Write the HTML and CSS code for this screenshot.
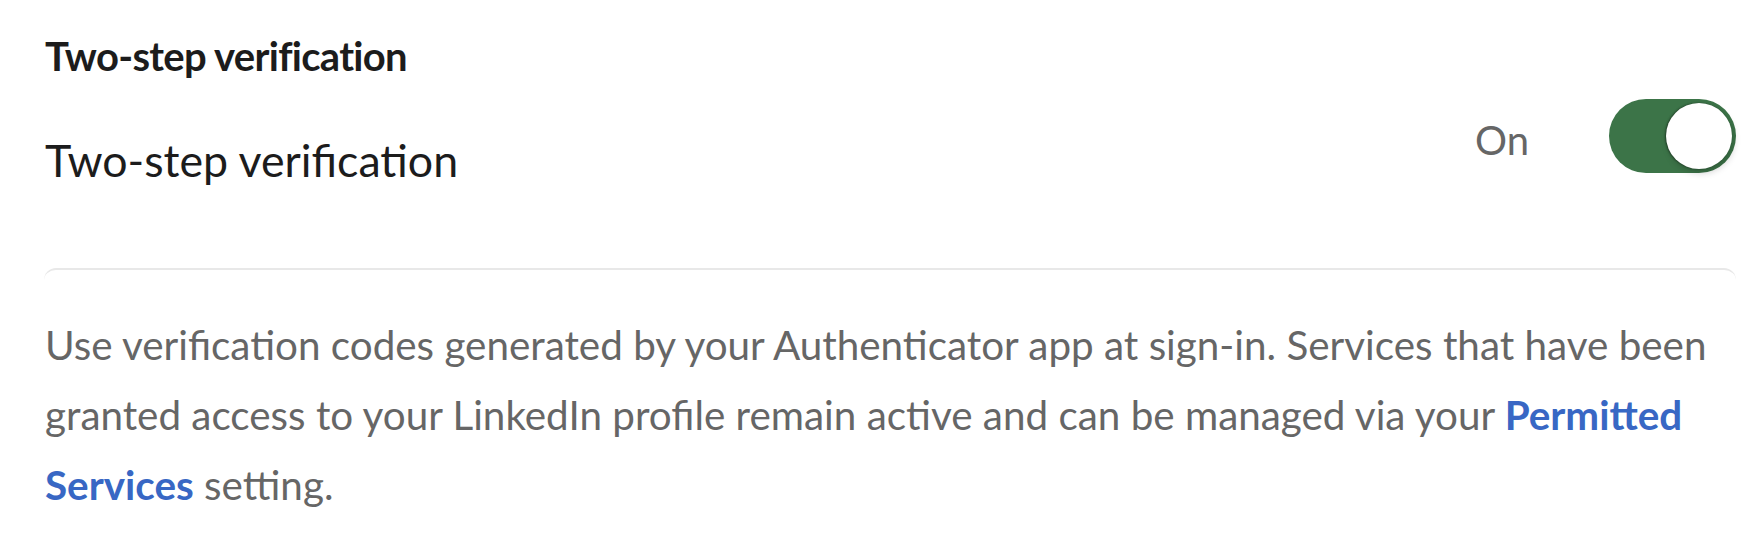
FILE: index.html
```html
<!DOCTYPE html>
<html lang="en">
  <head>
    <meta charset="UTF-8" />
    <meta name="viewport" content="width=device-width, initial-scale=1.0" />
    <title>Two-step verification</title>
    <link rel="stylesheet" href="styles.css">
  </head>
  <body>
    <section class="setting">
      <h2 class="setting-heading">Two-step verification</h2>

      <div class="setting-row">
        <h3 class="setting-title">Two-step verification</h3>
        <div class="setting-control">
          <span class="state">On</span>
          <button class="switch" type="button" role="switch" aria-checked="true" aria-label="Two-step verification">
            <span class="knob"></span>
          </button>
        </div>
      </div>

      <div class="setting-details">
        <p>
          Use verification codes generated by your Authenticator app at sign-in.
          Services that have been granted access to your LinkedIn profile remain
          active and can be managed via your
          <a href="#" class="link">Permitted Services</a> setting.
        </p>
      </div>
    </section>
  </body>
</html>
```
FILE: styles.css
```css
body {
  margin: 0;
  padding: 0;
  background-color: #ffffff;
  font-family: Lato, "Open Sans", sans-serif;
}

.setting {
  padding: 31px 27px 0 45px;
}

.setting-heading {
  margin: 0;
  font-size: 40px;
  line-height: 50px;
  font-weight: 700;
  letter-spacing: -0.7px;
  color: #1c1c1c;
}

.setting-row {
  display: flex;
  justify-content: space-between;
  align-items: flex-start;
}

.setting-title {
  margin: 52px 0 0;
  font-size: 44.7px;
  line-height: 54px;
  font-weight: 400;
  color: #1c1c1c;
}

.setting-control {
  display: flex;
  align-items: center;
  gap: 80px;
  margin-top: 18px;
}

.state {
  padding-top: 7px;
  font-size: 40px;
  line-height: 48px;
  color: #666666;
}

.switch {
  display: flex;
  justify-content: flex-end;
  align-items: center;
  width: 127px;
  height: 74px;
  padding: 0 4px;
  border: none;
  border-radius: 37px;
  background-color: #3c7448;
  cursor: pointer;
}

.knob {
  display: block;
  width: 66px;
  height: 66px;
  border-radius: 50%;
  background-color: #ffffff;
  box-shadow: -1px 0 2px rgba(0, 0, 0, 0.45), 2px 4px 7px rgba(0, 0, 0, 0.18);
}

.setting-details {
  margin: 81px 0 0 -1px;
  padding: 40px 0 0 1px;
  border-top: 2px solid #e8e8e8;
  border-radius: 12px;
}

.setting-details p {
  margin: 0;
  font-size: 40.4px;
  line-height: 70px;
  color: #666666;
}

.link {
  color: #3867c4;
  font-weight: 700;
  text-decoration: none;
}
```
